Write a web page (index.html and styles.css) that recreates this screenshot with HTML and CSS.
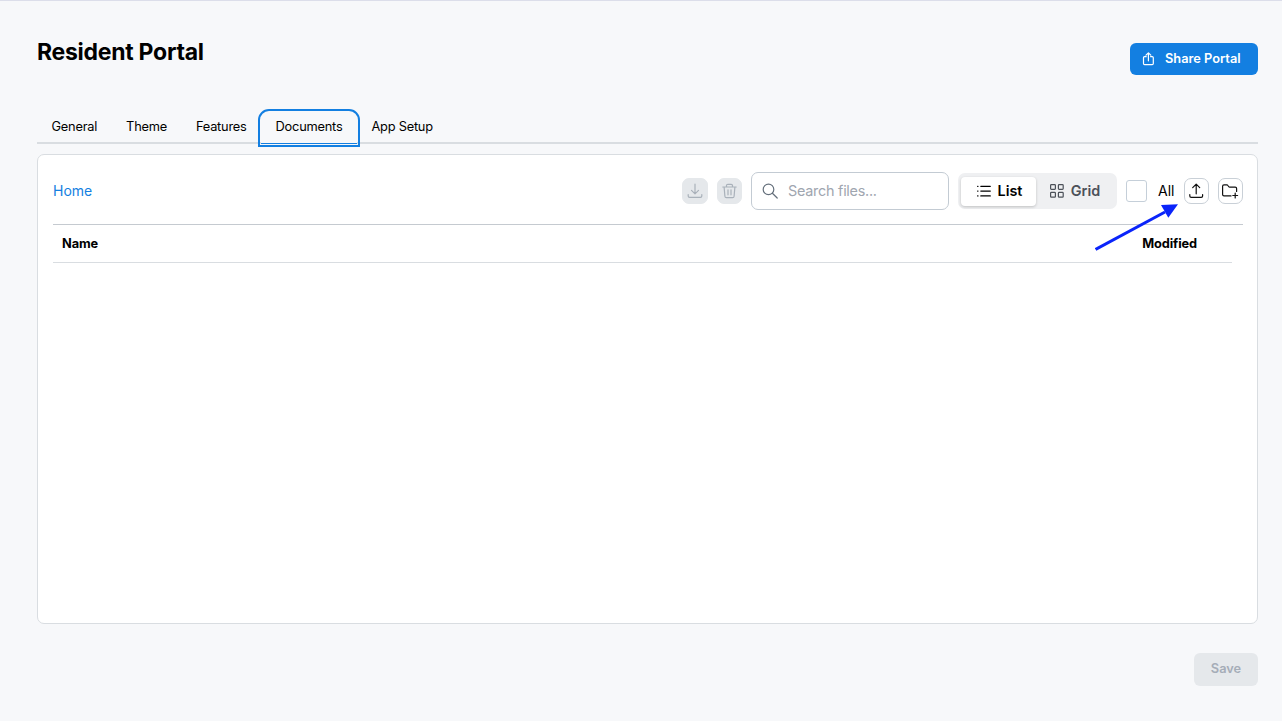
FILE: index.html
```html
<!DOCTYPE html>
<html lang="en">
<head>
    <meta charset="UTF-8">
    <meta name="viewport" content="width=device-width, initial-scale=1.0">
    <title>Resident Portal</title>
    <link rel="stylesheet" href="styles.css">
</head>
<body>
    <header class="header">
        <h1>Resident Portal</h1>
        <button class="button share">
            <svg width="13" height="15" viewBox="0 0 13 15"><path d="M4.2 4.7H2.6Q1.5 4.7 1.5 5.8V11.5Q1.5 12.7 2.6 12.7H10.2Q11.3 12.7 11.3 11.5V5.8Q11.3 4.7 10.2 4.7H8.6M6.4 8.8V1M4 3.2L6.4 .8L8.8 3.2"/></svg>
            <span>Share Portal</span>
        </button>
    </header>

    <nav class="tabs">
        <a class="tab">General</a>
        <a class="tab">Theme</a>
        <a class="tab">Features</a>
        <a class="tab active">Documents</a>
        <a class="tab">App Setup</a>
    </nav>

    <main class="card">
        <div class="toolbar">
            <a class="crumb">Home</a>
            <button class="icon-button download disabled">
                <svg width="16" height="16" viewBox="0 0 16 16"><path d="M8 1.2V10.8M4.5 7.4L8 10.9L11.5 7.4M1.2 11.6V13Q1.2 14.4 2.6 14.4H13.4Q14.8 14.4 14.8 13V11.6"/></svg>
            </button>
            <button class="icon-button disabled trash">
                <svg width="15" height="16" viewBox="0.5 0 15 16"><path d="M1.3 4H14.7M5 4V2.6Q5 1.3 6.3 1.3H9.7Q11 1.3 11 2.6V4M2.6 4L3.4 13.2Q3.5 14.6 4.9 14.6H11.1Q12.5 14.6 12.6 13.2L13.4 4M6.5 6.8V11.8M9.5 6.8V11.8"/></svg>
            </button>
            <div class="search">
                <svg width="16" height="16" viewBox="0 0 16 16"><circle cx="6.5" cy="6.4" r="5.3"/><path d="M10.4 10.3L15.2 15"/></svg>
                <input type="text" placeholder="Search files...">
            </div>
            <div class="toggle">
                <button class="view selected">
                    <svg width="14" height="14" viewBox="0 0 14 14"><path d="M3.8 2.3H13.3M3.8 7.1H13.3M3.8 11.9H13.3M.6 2.3H1M.6 7.1H1M.6 11.9H1"/></svg>
                    <span>List</span>
                </button>
                <button class="view">
                    <svg width="14" height="14" viewBox="0 0 14 14"><rect x=".6" y=".6" width="4.8" height="4.8" rx=".8"/><rect x="8.4" y=".6" width="4.8" height="4.8" rx=".8"/><rect x=".6" y="8.4" width="4.8" height="4.8" rx=".8"/><rect x="8.4" y="8.4" width="4.8" height="4.8" rx=".8"/></svg>
                    <span>Grid</span>
                </button>
            </div>
            <span class="checkbox"></span>
            <span class="all">All</span>
            <button class="icon-button">
                <svg width="15" height="16" viewBox="0.8 0 15 16"><path d="M8 10.8V1.4M4.5 4.7L8 1.2L11.5 4.7M1.6 11.6V13Q1.6 14.4 3 14.4H13Q14.4 14.4 14.4 13V11.6"/></svg>
            </button>
            <button class="icon-button folder">
                <svg width="17" height="16" viewBox="1 0 17 16"><path d="M10 12.9H3Q1.6 12.9 1.6 11.5V3.3Q1.6 1.9 3 1.9H5.9Q6.5 1.9 6.9 2.5L7.6 3.5Q8 4.1 8.7 4.1H14.2Q15.6 4.1 15.6 5.5V8.4M14.2 10.1V14.9M11.8 12.5H16.6"/></svg>
            </button>
        </div>
        <div class="table-head">
            <span>Name</span>
            <span class="modified">Modified</span>
        </div>
    </main>

    <footer class="footer">
        <button class="button save">Save</button>
    </footer>

    <svg class="arrow" width="84" height="48" viewBox="0 0 84 48"><path class="shaft" d="M.6 45.5L70 8"/><path class="tip" d="M83 .2L66 1.1L73.3 13.8Z"/></svg>
</body>
</html>
```

FILE: styles.css
```css
* {
    box-sizing: border-box;
}
body {
    font-family: Inter, "Liberation Sans", sans-serif;
    margin: 0;
    padding: 0 24px 0 37px;
    height: 721px;
    overflow: hidden;
    background-color: #f7f8fa;
    border-top: 1px solid #dcdeea;
    color: #000;
    display: flex;
    flex-direction: column;
}
button {
    font-family: inherit;
    border: 0;
    padding: 0;
    margin: 0;
    display: flex;
    align-items: center;
}
svg {
    flex: none;
    fill: none;
    stroke: currentColor;
    stroke-width: 1.2;
    stroke-linecap: round;
    stroke-linejoin: round;
}
.header {
    display: flex;
    justify-content: space-between;
    align-items: flex-start;
    height: 110px;
    padding-top: 37px;
}
h1 {
    margin: 0;
    font-size: 23px;
    line-height: 28px;
    font-weight: 700;
    letter-spacing: -0.27px;
}
.button {
    height: 32px;
    border-radius: 6px;
    font-size: 12.8px;
    font-weight: 600;
}
.share {
    width: 128px;
    margin-top: 5px;
    padding-left: 12px;
    gap: 10px;
    background-color: #137fe1;
    color: #fff;
}
.share span {
    padding-bottom: 1px;
}
.tabs {
    display: flex;
    height: 33px;
    border-bottom: 2px solid #d9dde1;
}
.tab {
    height: 31px;
    padding: 0 14.5px;
    font-size: 12.8px;
    line-height: 31px;
    letter-spacing: -0.22px;
}
.active {
    height: 32px;
    margin-top: 1px;
    line-height: 29px;
    border-bottom: 1px solid #137fe1;
    border-radius: 8px 8px 0 0;
    outline: 2px solid #137fe1;
    outline-offset: 1px;
    background-color: #f7f8fa;
}
.card {
    height: 470px;
    margin-top: 10px;
    padding: 17px 14px 0 15px;
    background-color: #fff;
    border: 1px solid #d9dde1;
    border-radius: 7px;
}
.toolbar {
    display: flex;
    align-items: center;
    height: 53px;
    padding-bottom: 14px;
    border-bottom: 1px solid #c5cad0;
}
.crumb {
    margin-right: auto;
    padding-bottom: 1px;
    color: #137fe1;
    font-size: 14px;
}
.icon-button {
    width: 25px;
    height: 26px;
    justify-content: center;
    border: 1px solid #c9d0d7;
    border-radius: 7px;
    background-color: #fff;
    color: #111;
}
.download {
    width: 26px;
}
.disabled {
    border-color: #e5e8eb;
    background-color: #e5e8eb;
    color: #a9b1ba;
}
.trash {
    margin-left: 9px;
}
.search {
    display: flex;
    align-items: center;
    width: 198px;
    height: 38px;
    margin-left: 9px;
    padding-left: 10px;
    gap: 10px;
    border: 1px solid #c3cbd3;
    border-radius: 7px;
    color: #65707c;
}
.search input {
    width: 150px;
    padding: 0 0 1px;
    border: 0;
    outline: 0;
    font: 14.4px Inter, sans-serif;
    letter-spacing: -0.25px;
}
.search input::placeholder {
    color: #9fa6b0;
}
.toggle {
    display: flex;
    align-items: center;
    width: 159px;
    height: 36px;
    margin-left: 9px;
    padding: 0 3px;
    border-radius: 7px;
    background-color: #eff0f2;
}
.view {
    width: 74px;
    height: 29px;
    justify-content: center;
    gap: 7px;
    border-radius: 4px;
    background: none;
    color: #4c5159;
    font-size: 14.4px;
    font-weight: 600;
}
.view span {
    padding-bottom: 1px;
}
.selected {
    width: 75px;
    padding-left: 2px;
    background-color: #fff;
    box-shadow: 0 1px 3px rgba(0, 0, 0, 0.2);
    color: #000;
}
.view + .view {
    margin-left: 2px;
}
.checkbox {
    width: 21px;
    height: 22px;
    margin-left: 9px;
    border: 1px solid #c5cfd9;
    border-radius: 3px;
}
.all {
    width: 17px;
    margin: 0 9px 0 11px;
    padding-bottom: 1px;
    font-size: 14px;
}
.folder {
    margin-left: 9px;
}
.table-head {
    display: flex;
    justify-content: space-between;
    height: 38px;
    margin-right: 11px;
    padding: 0 35px 0 9px;
    border-bottom: 1px solid #d9dde1;
    font-size: 12.8px;
    line-height: 37px;
    font-weight: 700;
    letter-spacing: -0.1px;
}
.footer {
    display: flex;
    justify-content: flex-end;
    margin-top: 29px;
}
.save {
    width: 64px;
    height: 33px;
    justify-content: center;
    padding-bottom: 2px;
    background-color: #e5e8eb;
    color: #a5adb8;
}
/* pointer to the upload button */
.arrow {
    position: absolute;
    left: 1095px;
    top: 204px;
}
.shaft {
    stroke: #0a24fa;
    stroke-width: 3;
    stroke-linecap: butt;
}
.tip {
    fill: #0a24fa;
    stroke: none;
}
```
